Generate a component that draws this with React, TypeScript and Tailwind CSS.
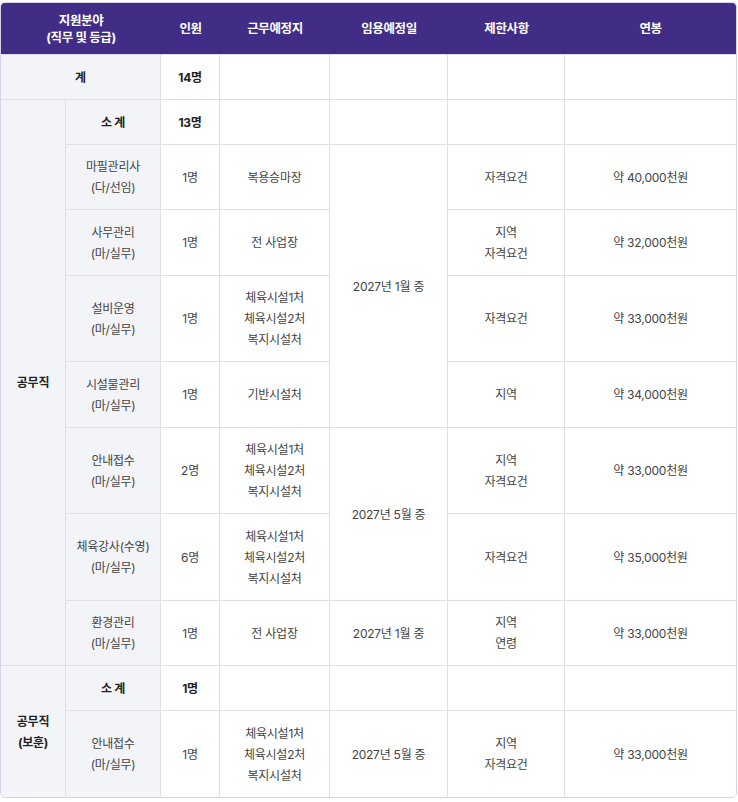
import React from "react";

const font = { fontFamily: '"Inter", "Noto Sans CJK KR", "Noto Sans", sans-serif' };

const B = "border-r border-b border-[#e0dfe7]";
const bodyTd = `${B} px-2 py-[11px] text-center align-middle text-[#444] bg-white`;
const labelTd = `${B} px-2 py-[11px] text-center align-middle text-[#444] bg-[#f3f4f8]`;
const boldLabelTd = `${B} px-2 py-[11px] text-center align-middle font-bold text-[#222] bg-[#f3f4f8]`;
const boldTd = `${B} px-2 py-[11px] text-center align-middle font-bold text-[#222] bg-white`;

function Lines({ items }: { items: string[] }) {
  return (
    <>
      {items.map((t, i) => (
        <div key={i}>{t}</div>
      ))}
    </>
  );
}

export default function App() {
  const th = "px-2 text-center align-middle font-bold text-white text-[12.5px] leading-[17px] tracking-[-0.03em] border-b border-[#e0dfe7]";
  return (
    <div className="bg-white w-[738px] h-[802px] pt-[2px]" style={font}>
      <div className="w-[737px] border border-[#d6d4e6] rounded-[5px] overflow-hidden">
        <table className="w-full table-fixed border-separate border-spacing-0 text-[12px] leading-[21px] tracking-[-0.02em]">
          <colgroup>
            <col className="w-[65px]" />
            <col className="w-[95px]" />
            <col className="w-[59px]" />
            <col className="w-[110px]" />
            <col className="w-[118px]" />
            <col className="w-[117px]" />
            <col />
          </colgroup>
          <thead>
            <tr className="h-[52px] bg-[#412d86]">
              <th colSpan={2} className={th}>
                <div>지원분야</div>
                <div>(직무 및 등급)</div>
              </th>
              <th className={th}>인원</th>
              <th className={th}>근무예정지</th>
              <th className={th}>임용예정일</th>
              <th className={th}>제한사항</th>
              <th className={th}>연봉</th>
            </tr>
          </thead>
          <tbody>
            <tr className="h-[45px]">
              <td colSpan={2} className={boldLabelTd}>계</td>
              <td className={boldTd}>14명</td>
              <td className={bodyTd}></td>
              <td className={bodyTd}></td>
              <td className={bodyTd}></td>
              <td className={`${bodyTd} border-r-0`}></td>
            </tr>
            <tr className="h-[45px]">
              <td rowSpan={8} className={boldLabelTd}>공무직</td>
              <td className={boldLabelTd}>소 계</td>
              <td className={boldTd}>13명</td>
              <td className={bodyTd}></td>
              <td className={bodyTd}></td>
              <td className={bodyTd}></td>
              <td className={`${bodyTd} border-r-0`}></td>
            </tr>
            <tr className="h-[65px]">
              <td className={labelTd}><Lines items={["마필관리사", "(다/선임)"]} /></td>
              <td className={bodyTd}>1명</td>
              <td className={bodyTd}>복용승마장</td>
              <td rowSpan={4} className={bodyTd}>2027년 1월 중</td>
              <td className={bodyTd}>자격요건</td>
              <td className={`${bodyTd} border-r-0`}>약 40,000천원</td>
            </tr>
            <tr className="h-[66px]">
              <td className={labelTd}><Lines items={["사무관리", "(마/실무)"]} /></td>
              <td className={bodyTd}>1명</td>
              <td className={bodyTd}>전 사업장</td>
              <td className={bodyTd}><Lines items={["지역", "자격요건"]} /></td>
              <td className={`${bodyTd} border-r-0`}>약 32,000천원</td>
            </tr>
            <tr className="h-[86px]">
              <td className={labelTd}><Lines items={["설비운영", "(마/실무)"]} /></td>
              <td className={bodyTd}>1명</td>
              <td className={bodyTd}><Lines items={["체육시설1처", "체육시설2처", "복지시설처"]} /></td>
              <td className={bodyTd}>자격요건</td>
              <td className={`${bodyTd} border-r-0`}>약 33,000천원</td>
            </tr>
            <tr className="h-[66px]">
              <td className={labelTd}><Lines items={["시설물관리", "(마/실무)"]} /></td>
              <td className={bodyTd}>1명</td>
              <td className={bodyTd}>기반시설처</td>
              <td className={bodyTd}>지역</td>
              <td className={`${bodyTd} border-r-0`}>약 34,000천원</td>
            </tr>
            <tr className="h-[86px]">
              <td className={labelTd}><Lines items={["안내접수", "(마/실무)"]} /></td>
              <td className={bodyTd}>2명</td>
              <td className={bodyTd}><Lines items={["체육시설1처", "체육시설2처", "복지시설처"]} /></td>
              <td rowSpan={2} className={bodyTd}>2027년 5월 중</td>
              <td className={bodyTd}><Lines items={["지역", "자격요건"]} /></td>
              <td className={`${bodyTd} border-r-0`}>약 33,000천원</td>
            </tr>
            <tr className="h-[87px]">
              <td className={labelTd}><Lines items={["체육강사(수영)", "(마/실무)"]} /></td>
              <td className={bodyTd}>6명</td>
              <td className={bodyTd}><Lines items={["체육시설1처", "체육시설2처", "복지시설처"]} /></td>
              <td className={bodyTd}>자격요건</td>
              <td className={`${bodyTd} border-r-0`}>약 35,000천원</td>
            </tr>
            <tr className="h-[65px]">
              <td className={labelTd}><Lines items={["환경관리", "(마/실무)"]} /></td>
              <td className={bodyTd}>1명</td>
              <td className={bodyTd}>전 사업장</td>
              <td className={bodyTd}>2027년 1월 중</td>
              <td className={bodyTd}><Lines items={["지역", "연령"]} /></td>
              <td className={`${bodyTd} border-r-0`}>약 33,000천원</td>
            </tr>
            <tr className="h-[45px]">
              <td rowSpan={2} className={`${boldLabelTd} border-b-0`}><Lines items={["공무직", "(보훈)"]} /></td>
              <td className={boldLabelTd}>소 계</td>
              <td className={boldTd}>1명</td>
              <td className={bodyTd}></td>
              <td className={bodyTd}></td>
              <td className={bodyTd}></td>
              <td className={`${bodyTd} border-r-0`}></td>
            </tr>
            <tr className="h-[86px]">
              <td className={`${labelTd} border-b-0`}><Lines items={["안내접수", "(마/실무)"]} /></td>
              <td className={`${bodyTd} border-b-0`}>1명</td>
              <td className={`${bodyTd} border-b-0`}><Lines items={["체육시설1처", "체육시설2처", "복지시설처"]} /></td>
              <td className={`${bodyTd} border-b-0`}>2027년 5월 중</td>
              <td className={`${bodyTd} border-b-0`}><Lines items={["지역", "자격요건"]} /></td>
              <td className={`${bodyTd} border-b-0 border-r-0`}>약 33,000천원</td>
            </tr>
          </tbody>
        </table>
      </div>
    </div>
  );
}
